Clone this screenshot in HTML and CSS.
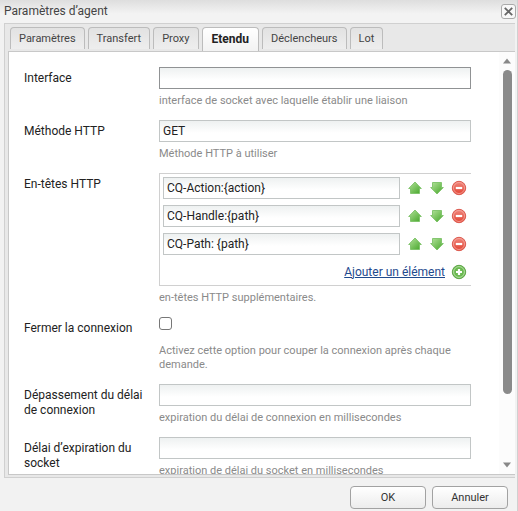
FILE: index.html
```html
<!DOCTYPE html>
<html lang="fr">
<head>
<meta charset="utf-8">
<title>Paramètres d’agent</title>
<link rel="stylesheet" href="styles.css">
</head>
<body>
<svg width="0" height="0" class="defs" aria-hidden="true">
  <defs>
    <linearGradient id="green" x1="0" y1="0" x2="1" y2="1"><stop offset="0" stop-color="#b5e39c"/><stop offset="1" stop-color="#43a527"/></linearGradient>
    <linearGradient id="red" x1="0" y1="0" x2="0" y2="1"><stop offset="0" stop-color="#f08a80"/><stop offset="1" stop-color="#e2402f"/></linearGradient>
    <symbol id="up" viewBox="0 0 16 16"><path d="M8 2 14.300 8.500H12.500V13.500H3.500V8.500H1.700Z" fill="url(#green)" stroke="#7cc266" stroke-width=".9" stroke-linejoin="round"/></symbol>
    <symbol id="down" viewBox="0 0 16 16"><path d="M8 14 14.300 7.500H12.500V2.500H3.500V7.500H1.700Z" fill="url(#green)" stroke="#7cc266" stroke-width=".9" stroke-linejoin="round"/></symbol>
    <symbol id="remove" viewBox="0 0 16 16"><circle cx="8" cy="8" r="6.700" fill="url(#red)" stroke="#dc5b50"/><circle cx="8" cy="8" r="5.500" fill="none" stroke="#f6aaa2" stroke-width=".8"/><path d="M4.800 8h6.400" stroke="#fff" stroke-width="2.200"/></symbol>
    <symbol id="add" viewBox="0 0 16 16"><circle cx="8" cy="8" r="6.700" fill="#6bb950" stroke="#5fa548"/><circle cx="8" cy="8" r="5.400" fill="none" stroke="#b2dfa2" stroke-width="1"/><path d="M5 8h6M8 5v6" stroke="#fff" stroke-width="2.200"/></symbol>
  </defs>
</svg>
<div class="dialog" role="dialog" aria-labelledby="title">
  <header class="titlebar">
    <h1 id="title">Paramètres d’agent</h1>
    <button class="close" type="button" aria-label="Fermer"><svg viewBox="0 0 14 14"><path d="m3 3 8 8M11 3l-8 8" stroke="#666" stroke-width="2"/></svg></button>
  </header>
  <div class="frame">
    <nav class="tabs" role="tablist">
      <button type="button" role="tab">Paramètres</button>
      <button type="button" role="tab">Transfert</button>
      <button type="button" role="tab">Proxy</button>
      <button type="button" role="tab" aria-selected="true" class="active">Etendu</button>
      <button type="button" role="tab">Déclencheurs</button>
      <button type="button" role="tab">Lot</button>
    </nav>
    <div class="panel">
      <form class="form">
        <div class="row">
          <label for="iface">Interface</label>
          <div class="field"><input type="text" id="iface" class="text focused"><p>interface de socket avec laquelle établir une liaison</p></div>
        </div>
        <div class="row">
          <label for="method">Méthode HTTP</label>
          <div class="field"><input type="text" id="method" class="text" value="GET"><p>Méthode HTTP à utiliser</p></div>
        </div>
        <div class="row">
          <label for="header1">En-têtes HTTP</label>
          <div class="field">
            <div class="multi">
              <div class="item"><input type="text" id="header1" class="text" value="CQ-Action:{action}"><button type="button" aria-label="Monter"><svg><use href="#up"/></svg></button><button type="button" aria-label="Descendre"><svg><use href="#down"/></svg></button><button type="button" aria-label="Supprimer"><svg><use href="#remove"/></svg></button></div>
              <div class="item"><input type="text" aria-label="En-tête 2" class="text" value="CQ-Handle:{path}"><button type="button" aria-label="Monter"><svg><use href="#up"/></svg></button><button type="button" aria-label="Descendre"><svg><use href="#down"/></svg></button><button type="button" aria-label="Supprimer"><svg><use href="#remove"/></svg></button></div>
              <div class="item"><input type="text" aria-label="En-tête 3" class="text" value="CQ-Path: {path}"><button type="button" aria-label="Monter"><svg><use href="#up"/></svg></button><button type="button" aria-label="Descendre"><svg><use href="#down"/></svg></button><button type="button" aria-label="Supprimer"><svg><use href="#remove"/></svg></button></div>
              <div class="item add"><a href="#">Ajouter un élément</a><button type="button" aria-label="Ajouter"><svg><use href="#add"/></svg></button></div>
            </div>
            <p>en-têtes HTTP supplémentaires.</p>
          </div>
        </div>
        <div class="row">
          <label for="closeconn">Fermer la connexion</label>
          <div class="field"><div class="check"><input type="checkbox" id="closeconn"></div><p>Activez cette option pour couper la connexion après chaque demande.</p></div>
        </div>
        <div class="row">
          <label for="ctimeout">Dépassement du délai de connexion</label>
          <div class="field"><input type="text" id="ctimeout" class="text"><p>expiration du délai de connexion en millisecondes</p></div>
        </div>
        <div class="row">
          <label for="stimeout">Délai d’expiration du socket</label>
          <div class="field"><input type="text" id="stimeout" class="text"><p>expiration de délai du socket en millisecondes</p></div>
        </div>
      </form>
      <div class="scrollbar" aria-hidden="true">
        <svg class="arrow" viewBox="0 0 8 6"><path d="M4 .5 8 5.500H0Z"/></svg>
        <div class="track"><div class="thumb"></div></div>
        <svg class="arrow" viewBox="0 0 8 6"><path d="M4 5.500 8 .5H0Z"/></svg>
      </div>
    </div>
  </div>
  <footer class="actions">
    <button type="button">OK</button>
    <button type="button">Annuler</button>
  </footer>
</div>
</body>
</html>
```

FILE: styles.css
```css
* { box-sizing: border-box; }
body {
  margin: 0;
  background: #f2f2f2;
  font: 12px/15px Roboto, "Noto Sans", sans-serif;
  color: #222;
}
button, input { font: inherit; color: inherit; }
.defs { position: absolute; }

.dialog {
  display: flex;
  flex-direction: column;
  height: 100vh;
  padding: 0 2px 0 4px;
  border-right: 1px solid #d0d0d0;
  background: #f2f2f2;
}
.titlebar {
  flex: none;
  display: flex;
  align-items: center;
  justify-content: space-between;
  height: 23px;
  margin: 0 -2px 0 -4px;
  padding: 0 1px 0 4px;
  background: linear-gradient(#dedede, #f3f3f3 60%);
}
.titlebar h1 { margin: 0; font-size: 12px; font-weight: 400; color: #444; }
.close {
  width: 15px;
  height: 15px;
  padding: 0;
  border: 1px solid #aaa;
  border-radius: 3px;
  background: #f8f8f8;
}
.close svg { display: block; width: 13px; height: 13px; }

.frame {
  flex: 1;
  min-height: 0;
  display: flex;
  flex-direction: column;
  padding: 0 0 2px 3px;
  border: 1px solid #d0d0d0;
  border-right: 0;
  background: #e8e8e8;
}
.tabs {
  flex: none;
  display: flex;
  gap: 3px;
  height: 27px;
  padding: 3px 0 0 2px;
}
.tabs button {
  height: 22px;
  padding: 0 8px;
  border: 1px solid #bcbcbc;
  border-bottom: 0;
  border-radius: 4px 4px 0 0;
  background: linear-gradient(#e2e2e2, #eee);
  font-size: 11px;
  color: #444;
  white-space: nowrap;
}
.tabs .active {
  height: 24px;
  padding: 0 9px;
  background: linear-gradient(#fff, #f2f2f2);
  font-size: 12px;
  font-weight: 700;
  color: #222;
}
.panel {
  flex: 1;
  min-height: 0;
  display: flex;
  overflow: hidden;
  border: 1px solid #c8c8c8;
  border-right: 0;
  background: #fff;
}
.form {
  flex: 1;
  min-width: 0;
  padding: 15px 28px 0 15px;
  overflow: hidden;
}
.row { display: flex; padding-bottom: 12px; }
.row > label { flex: none; width: 135px; padding: 4px 8px 0 0; }
.field { flex: 1; min-width: 0; }
.field p { margin: 5px 0 0; font-size: 11px; line-height: 14px; color: #8a8a8a; }
.text {
  display: block;
  width: 100%;
  height: 22px;
  padding: 0 3px;
  border: 1px solid #c2c6c6;
  border-radius: 0;
  background: linear-gradient(#eef1f1, #fff 60%);
}
.focused { border-color: #909294; outline: 0; }
.multi {
  display: grid;
  gap: 6px;
  height: 113px;
  padding: 3px 4px 3px 3px;
  border: solid #d0d0d0;
  border-width: 1px 0 1px 1px;
  align-content: start;
}
.item { display: flex; align-items: center; gap: 6px; height: 22px; }
.item .text { flex: 1; min-width: 0; margin-right: 1px; }
.item button { flex: none; width: 16px; height: 16px; padding: 0; border: 0; background: none; }
.item svg { display: block; width: 16px; height: 16px; }
.add { justify-content: flex-end; }
.add a { color: #1f4a8e; }
.check { display: flex; height: 22px; }
.check input {
  appearance: none;
  width: 13px;
  height: 13px;
  margin: 0;
  border: 1px solid #777;
  border-radius: 3px;
  background: #fff;
}
.scrollbar {
  flex: none;
  width: 16px;
  display: flex;
  flex-direction: column;
  align-items: center;
  gap: 6px;
  padding: 6px 0;
  background: #fcfcfc;
}
.arrow { flex: none; width: 8px; height: 6px; fill: #888; }
.track { flex: 1; }
.thumb { width: 9px; height: 84%; border-radius: 5px; background: #8a8a8a; }

.actions {
  flex: none;
  display: flex;
  justify-content: flex-end;
  gap: 6px;
  padding: 8px 7px 2px 0;
}
.actions button {
  width: 76px;
  height: 23px;
  padding: 0;
  border: 1px solid #a2a2a2;
  border-radius: 4px;
  background: linear-gradient(#fff, #ececec);
  font-size: 11px;
  color: #333;
}
```
